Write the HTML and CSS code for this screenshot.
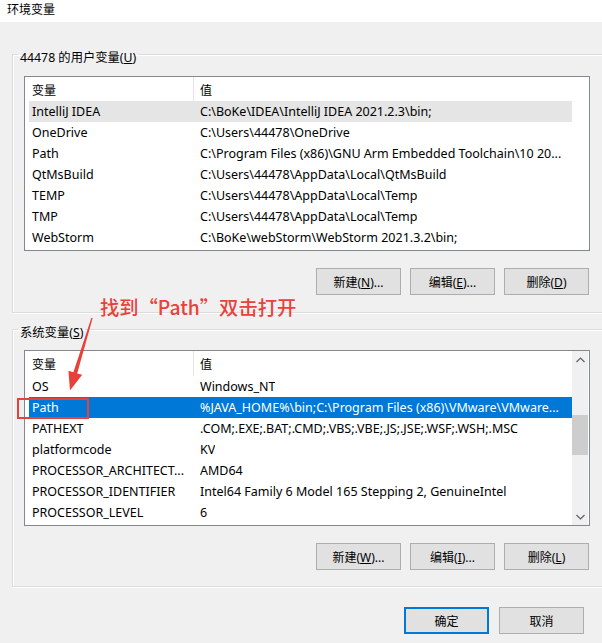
FILE: index.html
```html
<!DOCTYPE html>
<html lang="zh-CN">
<head>
<meta charset="utf-8">
<title>环境变量</title>
<link rel="stylesheet" href="styles.css">
</head>
<body>
<div class="titlebar">环境变量</div>
<div class="dialog">
  <fieldset class="group group-user">
    <legend>44478 的用户变量(<u>U</u>)</legend>
    <div class="list list-user">
      <div class="rows">
        <div class="head"><span class="h1">变量</span><span class="h2">值</span></div>
        <div class="row hover"><span class="c1">IntelliJ IDEA</span><span class="c2">C:\BoKe\IDEA\IntelliJ IDEA 2021.2.3\bin;</span></div>
        <div class="row"><span class="c1">OneDrive</span><span class="c2">C:\Users\44478\OneDrive</span></div>
        <div class="row"><span class="c1">Path</span><span class="c2">C:\Program Files (x86)\GNU Arm Embedded Toolchain\10 20...</span></div>
        <div class="row"><span class="c1">QtMsBuild</span><span class="c2">C:\Users\44478\AppData\Local\QtMsBuild</span></div>
        <div class="row"><span class="c1">TEMP</span><span class="c2">C:\Users\44478\AppData\Local\Temp</span></div>
        <div class="row"><span class="c1">TMP</span><span class="c2">C:\Users\44478\AppData\Local\Temp</span></div>
        <div class="row"><span class="c1">WebStorm</span><span class="c2">C:\BoKe\webStorm\WebStorm 2021.3.2\bin;</span></div>
      </div>
    </div>
    <div class="btns">
      <button class="btn">新建(<u>N</u>)...</button>
      <button class="btn">编辑(<u>E</u>)...</button>
      <button class="btn">删除(<u>D</u>)</button>
    </div>
  </fieldset>

  <fieldset class="group group-sys">
    <legend>系统变量(<u>S</u>)</legend>
    <div class="list list-sys">
      <div class="rows">
        <div class="head"><span class="h1">变量</span><span class="h2">值</span></div>
        <div class="row"><span class="c1">OS</span><span class="c2">Windows_NT</span></div>
        <div class="row selected"><span class="c1">Path</span><span class="c2">%JAVA_HOME%\bin;C:\Program Files (x86)\VMware\VMware...</span></div>
        <div class="row"><span class="c1">PATHEXT</span><span class="c2">.COM;.EXE;.BAT;.CMD;.VBS;.VBE;.JS;.JSE;.WSF;.WSH;.MSC</span></div>
        <div class="row"><span class="c1">platformcode</span><span class="c2">KV</span></div>
        <div class="row"><span class="c1">PROCESSOR_ARCHITECT...</span><span class="c2">AMD64</span></div>
        <div class="row"><span class="c1">PROCESSOR_IDENTIFIER</span><span class="c2">Intel64 Family 6 Model 165 Stepping 2, GenuineIntel</span></div>
        <div class="row"><span class="c1">PROCESSOR_LEVEL</span><span class="c2">6</span></div>
      </div>
      <div class="scrollbar">
        <div class="sb-btn">
          <svg width="9" height="6" viewBox="0 0 9 6"><polyline points="0.5,5 4.5,1 8.5,5" fill="none" stroke="#606060" stroke-width="1.2"/></svg>
        </div>
        <div class="sb-track"><div class="sb-thumb"></div></div>
        <div class="sb-btn">
          <svg width="9" height="6" viewBox="0 0 9 6"><polyline points="0.5,1 4.5,5 8.5,1" fill="none" stroke="#606060" stroke-width="1.2"/></svg>
        </div>
      </div>
    </div>
    <div class="btns">
      <button class="btn">新建(<u>W</u>)...</button>
      <button class="btn">编辑(<u>I</u>)...</button>
      <button class="btn">删除(<u>L</u>)</button>
    </div>
  </fieldset>

  <div class="dlg-btns">
    <button class="btn btn-default">确定</button>
    <button class="btn">取消</button>
  </div>
</div>

<div class="note">找到“Path”双击打开</div>
<svg class="arrow" width="40" height="80" viewBox="60 315 40 80">
  <polygon points="92.6,318.3 91.4,317.7 73.4,372.2 68.4,370.8 70,390.5 82.2,374.8 77.2,373.4" fill="#e8413b"/>
</svg>
<div class="mark"></div>
</body>
</html>
```

FILE: styles.css
```css
* { box-sizing: border-box; }

html, body {
  margin: 0;
  padding: 0;
}

body {
  width: 602px;
  height: 643px;
  overflow: hidden;
  position: relative;
  background: #f0f0f0;
  font-family: "Noto Sans", "Noto Sans CJK SC", sans-serif;
  font-size: 12px;
  color: #000;
}

.titlebar {
  height: 22px;
  background: #fff;
  padding-left: 7px;
  line-height: 17px;
  font-family: "Noto Sans CJK SC", sans-serif;
}

.group {
  margin: 0 0 0 12px;
  width: 594px;
  border: 1px solid #dcdcdc;
  box-shadow: inset 1px 1px 0 #fff, 1px 1px 0 #fff;
  padding: 0 0 0 11px;
  min-width: 0;
}

.group legend {
  margin-left: -6px;
  padding: 7px 2px 0;
  line-height: 16px;
  font-size: 12.3px;
  font-family: "Noto Sans", "Noto Sans CJK SC", sans-serif;
}

.group-user {
  margin-top: 21px;
  padding-top: 10px;
  padding-bottom: 17px;
}

.group-sys {
  margin-top: 5px;
  padding-top: 9px;
  padding-bottom: 16px;
}

.list {
  width: 566px;
  background: #fff;
  border: 1px solid #828790;
  padding-left: 4px;
  display: flex;
  font-size: 12.5px;
}

.list-user { height: 175px; }
.list-sys { height: 176px; }

.rows {
  width: 543px;
}

.head {
  height: 24px;
  display: flex;
  align-items: center;
  font-family: "Noto Sans CJK SC", sans-serif;
  font-size: 12px;
}

.group-sys .head { height: 25px; }

.h1 {
  width: 165px;
  height: 100%;
  padding-left: 3px;
  display: flex;
  align-items: center;
  border-right: 1px solid #e5e5e5;
}

.h2 {
  padding-left: 6px;
}

.row {
  height: 21px;
  display: flex;
  align-items: center;
  white-space: nowrap;
}

.row.hover { background: #e5e5e5; }
.row.selected { background: #0078d7; color: #fff; }

.c1 {
  width: 168px;
  padding-left: 3px;
  overflow: hidden;
}

.c2 {
  padding-left: 3px;
  overflow: hidden;
}

.scrollbar {
  width: 16px;
  height: 100%;
  background: #f0f0f0;
  display: flex;
  flex-direction: column;
}

.sb-btn {
  height: 17px;
  display: flex;
  align-items: center;
  justify-content: center;
}

.sb-track {
  flex: 1;
  padding-top: 47px;
}

.sb-thumb {
  height: 40px;
  background: #cdcdcd;
}

.btns {
  width: 566px;
  display: flex;
  justify-content: flex-end;
  gap: 9px;
  padding-right: 1px;
  margin-top: 17px;
}

.btn {
  width: 85px;
  height: 27px;
  margin: 0;
  padding: 0;
  background: #e1e1e1;
  border: 1px solid #adadad;
  border-radius: 0;
  font-family: "Noto Sans", "Noto Sans CJK SC", sans-serif;
  font-size: 12px;
  color: #000;
}

.btn-default {
  border: 2px solid #0078d7;
}

.dlg-btns {
  display: flex;
  justify-content: flex-end;
  gap: 10px;
  padding-right: 18px;
  margin-top: 20px;
}

.note {
  position: absolute;
  left: 100px;
  top: 295px;
  font-family: "Noto Sans CJK SC", sans-serif;
  font-size: 19.3px;
  font-weight: 500;
  line-height: 24px;
  color: #e8413b;
  white-space: nowrap;
}

.arrow {
  position: absolute;
  left: 60px;
  top: 315px;
}

.mark {
  position: absolute;
  left: 17px;
  top: 398px;
  width: 72px;
  height: 21px;
  border: 2px solid #e8413b;
}
```
